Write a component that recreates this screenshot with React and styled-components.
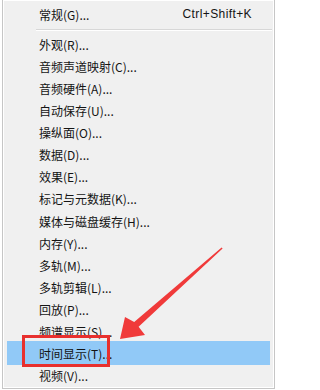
import styled, { createGlobalStyle } from "styled-components";

const Global = createGlobalStyle`
  body {
    margin: 0;
    background: #ffffff;
    font-family: "Noto Sans CJK SC", "Noto Sans", sans-serif;
  }
`;

const Frame = styled.div`
  position: relative;
  width: 278px;
  height: 390px;
  overflow: hidden;
  background: #ffffff;
`;

const Menu = styled.div`
  margin-left: 2px;
  width: 271px;
  height: 385px;
  padding: 3px 0 0;
  box-sizing: content-box;
  background: #f0f0f0;
  border-left: 1px solid #c6c6c6;
  border-right: 1px solid #c6c6c6;
  border-bottom: 1px solid #c6c6c6;
  box-shadow: 1px 1px 0 #ffffff inset, -1px -1px 0 #ffffff inset;
`;

const Item = styled.div`
  display: flex;
  align-items: center;
  justify-content: space-between;
  height: ${(p) => (p.$first ? "22px" : "22.13px")};
  margin: 0 4px;
  padding: 0 18px 0 32px;
  font-size: 12px;
  color: #141414;
  background: ${(p) => (p.$active ? "#91c9f7" : "transparent")};
  box-shadow: ${(p) => (p.$active ? "0 -2px 0 #91c9f7" : "none")};
`;

const Shortcut = styled.span`
  font-family: "Liberation Sans", Arial, sans-serif;
  font-size: 12px;
  letter-spacing: 0.4px;
`;

const Separator = styled.div`
  height: 8px;
  display: flex;
  align-items: center;
  padding-left: 33px;
  padding-right: 2px;

  &::after {
    content: "";
    flex: 1;
    height: 1px;
    background: #d7d7d7;
    box-shadow: 0 1px 0 #ffffff;
  }
`;

const Callout = styled.div`
  position: absolute;
  left: 22px;
  top: 335px;
  width: 82px;
  height: 26px;
  border: 3px solid #e8302e;
`;

const Arrow = styled.svg`
  position: absolute;
  left: 0;
  top: 0;
  pointer-events: none;
`;

const items = [
  "外观(R)...",
  "音频声道映射(C)...",
  "音频硬件(A)...",
  "自动保存(U)...",
  "操纵面(O)...",
  "数据(D)...",
  "效果(E)...",
  "标记与元数据(K)...",
  "媒体与磁盘缓存(H)...",
  "内存(Y)...",
  "多轨(M)...",
  "多轨剪辑(L)...",
  "回放(P)...",
  "频谱显示(S)...",
  "时间显示(T)...",
  "视频(V)...",
];

export default function App() {
  return (
    <>
      <Global />
      <Frame>
        <Menu>
          <Item $first>
            <span>常规(G)...</span>
            <Shortcut>Ctrl+Shift+K</Shortcut>
          </Item>
          <Separator />
          {items.map((label) => (
            <Item key={label} $active={label.startsWith("时间显示")}>
              <span>{label}</span>
            </Item>
          ))}
        </Menu>
        <Callout />
        <Arrow width="278" height="390" viewBox="0 0 278 390">
          <polygon
            points="222.6,248.4 138.6,326.8 145,335 120,339 125,317 134.2,322 221.6,247.6"
            fill="#f03a3a"
          />
        </Arrow>
      </Frame>
    </>
  );
}
